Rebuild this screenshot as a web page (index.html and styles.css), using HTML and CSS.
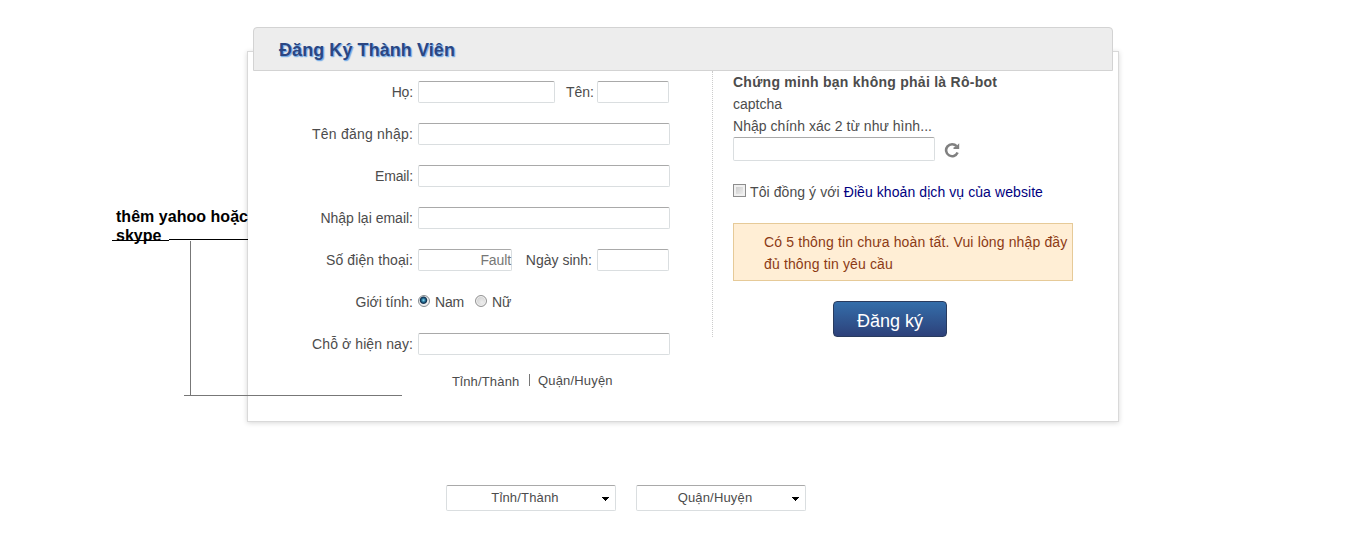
FILE: index.html
```html
<!DOCTYPE html>
<html lang="vi">
<head>
<meta charset="utf-8">
<title>Đăng Ký Thành Viên</title>
<link rel="stylesheet" href="styles.css">
</head>
<body>
<div class="page">
  <main class="panel">
    <h1 class="panel-title"><span>Đăng Ký Thành Viên</span></h1>
    <div class="columns">
      <form class="form">
        <div class="row"><label class="tight">Họ:</label><span class="field w-first"></span><label class="inline-label last-name">Tên:</label><span class="field w-short"></span></div>
        <div class="row"><label class="loose">Tên đăng nhập:</label><span class="field"></span></div>
        <div class="row"><label class="tight">Email:</label><span class="field"></span></div>
        <div class="row"><label>Nhập lại email:</label><span class="field"></span></div>
        <div class="row"><label class="semi-loose">Số điện thoại:</label><span class="field w-phone">Fault</span><label class="inline-label birthday">Ngày sinh:</label><span class="field w-short"></span></div>
        <div class="row"><label>Giới tính:</label><i class="radio checked"></i><span class="option">Nam</span><i class="radio second"></i><span class="option tight">Nữ</span></div>
        <div class="row"><label class="semi-loose">Chỗ ở hiện nay:</label><span class="field"></span></div>
        <div class="places"><span class="province">Tỉnh/Thành</span><i class="divider"></i><span class="district">Quận/Huyện</span></div>
      </form>
      <section class="verify">
        <strong class="verify-title">Chứng minh bạn không phải là Rô-bot</strong>
        <span>captcha</span>
        <span class="hint">Nhập chính xác 2 từ như hình...</span>
        <div class="captcha">
          <span class="field captcha-field"></span>
          <svg class="reload" width="16" height="16" viewBox="0 0 16 16"><path d="M12.600 4.200A6 6 0 1 0 13.600 10.600" fill="none" stroke="#808080" stroke-width="2.600"/><path d="M15.200 1.300V7H9.500V5.400L12 4.600Z" fill="#808080"/></svg>
        </div>
        <div class="terms"><i class="checkbox"></i><span class="agree">Tôi đồng ý với</span><a>Điều khoản dịch vụ của website</a></div>
        <div class="alert"><span class="line1">Có 5 thông tin chưa hoàn tất. Vui lòng nhập đầy</span><span class="line2">đủ thông tin yêu cầu</span></div>
        <button class="submit" type="button">Đăng ký</button>
      </section>
    </div>
  </main>
  <div class="selects">
    <div class="select"><span>Tỉnh/Thành</span><svg width="7" height="4" viewBox="0 0 7 4" shape-rendering="crispEdges"><path d="M0 0H7V1H6V2H5V3H4V4H3V3H2V2H1V1H0Z"/></svg></div>
    <div class="select"><span>Quận/Huyện</span><svg width="7" height="4" viewBox="0 0 7 4" shape-rendering="crispEdges"><path d="M0 0H7V1H6V2H5V3H4V4H3V3H2V2H1V1H0Z"/></svg></div>
  </div>
  <!-- Note with connector lines laid over the form -->
  <div class="note">thêm yahoo hoặc<br>skype</div>
  <svg class="connector" width="292" height="160" viewBox="0 0 292 160" shape-rendering="crispEdges">
    <path d="M0 3.5H57M57 2.5H136" stroke="#000"/>
    <path d="M78.500 4V158M72 158.500H290" stroke="#777"/>
  </svg>
</div>
</body>
</html>
```
FILE: styles.css
```css
* { box-sizing: border-box; }
body { margin: 0; background: #fff; color: #4c4c4c; font: 14px/22px "Liberation Sans", Arial, sans-serif; }
.page { position: relative; width: 1366px; height: 542px; overflow: hidden; padding: 51px 0 0 247px; }
.panel { width: 872px; height: 371px; padding: 0 5px; border: 1px solid #d9d9d9; background: #fff; box-shadow: 0 1px 5px rgba(0,0,0,.16); }
.panel-title { width: 860px; height: 44px; margin: -25px 0 0; padding-left: 25px; border: 1px solid #d3d3d3; border-radius: 4px 4px 0 0; background: #ededed; color: #2b4682; font-size: 18px; line-height: 44px; letter-spacing: .07px; text-shadow: 1px 1px 1px #7aaee6, 1px 1px 1px #7aaee6; white-space: nowrap; }
.columns { display: flex; }
.form { width: 459px; padding-top: 10px; display: flex; flex-direction: column; gap: 20px; }
.row { display: flex; height: 22px; white-space: nowrap; }
.row label { width: 160px; margin-right: 5px; text-align: right; }
.field { width: 252px; height: 22px; border: 1px solid #dadee0; border-top-color: #a9a9a9; border-radius: 2px; background: #fff; }
.w-first { width: 137px; }
.w-short { width: 72px; }
.w-phone { width: 94px; text-align: right; color: #777; line-height: 21px; letter-spacing: -.1px; }
.row .inline-label { margin-right: 3px; }
.row .last-name { width: 39px; }
.row .birthday { width: 80px; margin-right: 5px; }
.loose { letter-spacing: .2px; }
.semi-loose { letter-spacing: .1px; }
.tight { letter-spacing: -.15px; }
.radio { flex: none; width: 12px; height: 12px; margin-top: 4px; border: 1px solid #949494; border-radius: 50%; background: radial-gradient(circle at 60% 65%, #eee, #c7c7c7); box-shadow: inset 0 0 0 1px #f3f3f3; }
.checked { border-color: #858b90; background: radial-gradient(circle at 45% 42%, #8fdcf5 0, #247198 1.8px, #102e4d 3.2px, #eee 4.2px); box-shadow: none; }
.option { margin-left: 5px; }
.second { margin-left: 11px; }
.row .checked + .option { letter-spacing: -.15px; }
.places { display: flex; align-items: flex-start; height: 22px; margin-top: -4px; padding-left: 199px; font-size: 13px; line-height: 20px; letter-spacing: .17px; }
.province { width: 77px; padding-top: 1px; }
.divider { width: 1px; height: 12px; margin-top: 3px; background: #777; }
.district { margin-left: 8px; }
.verify { width: 362px; height: 266px; display: flex; flex-direction: column; padding-left: 20px; border-left: 1px dotted #ccc; white-space: nowrap; }
.verify-title { letter-spacing: .26px; }
.hint { letter-spacing: .04px; }
.captcha { display: flex; }
.captcha-field { width: 202px; height: 24px; }
.reload { margin: 5px 0 0 9px; }
.terms { display: flex; margin-top: 20px; }
.checkbox { width: 13px; height: 13px; margin: 3px 4px 0 0; border: 1px solid #8d8d8d; background: linear-gradient(135deg, #c5c5c5, #f4f4f4); box-shadow: inset 0 0 0 2px #f0f0f0; }
.agree { letter-spacing: .08px; }
.terms a { margin-left: 4px; color: #000080; letter-spacing: .08px; }
.alert { width: 340px; height: 58px; margin-top: 20px; padding: 7px 0 0 30px; border: 1px solid #e6ca98; background: #ffeed5; color: #8c3a14; display: flex; flex-direction: column; letter-spacing: .14px; }
.submit { width: 114px; height: 36px; margin: 20px 0 0 100px; padding: 3px 0 0; border: 1px solid #293b5e; border-radius: 4px; background: linear-gradient(#346eaa, #2d417a); color: #fff; font: 18px/32px "Liberation Sans", Arial, sans-serif; }
.selects { display: flex; gap: 20px; margin: 63px 0 0 199px; }
.select { display: flex; align-items: center; width: 170px; height: 26px; padding-right: 6px; border: 1px solid #dadee0; border-top-color: #a9a9a9; border-radius: 2px; font-size: 13px; letter-spacing: .17px; }
.select span { flex: 1; padding-left: 1px; text-align: center; }
.select svg { margin-top: 2px; }
.note { position: absolute; left: 116px; top: 207px; color: #000; font-size: 16px; font-weight: bold; line-height: 19px; letter-spacing: .03px; white-space: nowrap; }
.connector { position: absolute; left: 112px; top: 237px; fill: none; }
```
